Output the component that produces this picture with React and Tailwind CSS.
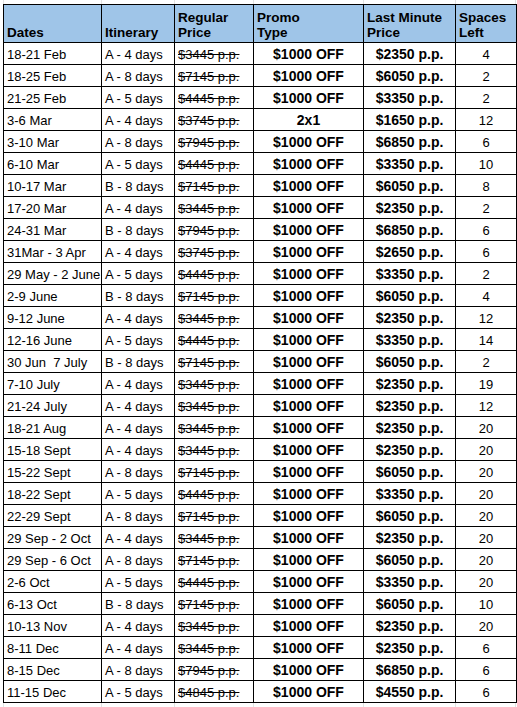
const rows = [
  ['18-21 Feb', 'A - 4 days', '$3445 p.p.', '$1000 OFF', '$2350 p.p.', '4'],
  ['18-25 Feb', 'A - 8 days', '$7145 p.p.', '$1000 OFF', '$6050 p.p.', '2'],
  ['21-25 Feb', 'A - 5 days', '$4445 p.p.', '$1000 OFF', '$3350 p.p.', '2'],
  ['3-6 Mar', 'A - 4 days', '$3745 p.p.', '2x1', '$1650 p.p.', '12'],
  ['3-10 Mar', 'A - 8 days', '$7945 p.p.', '$1000 OFF', '$6850 p.p.', '6'],
  ['6-10 Mar', 'A - 5 days', '$4445 p.p.', '$1000 OFF', '$3350 p.p.', '10'],
  ['10-17 Mar', 'B - 8 days', '$7145 p.p.', '$1000 OFF', '$6050 p.p.', '8'],
  ['17-20 Mar', 'A - 4 days', '$3445 p.p.', '$1000 OFF', '$2350 p.p.', '2'],
  ['24-31 Mar', 'B - 8 days', '$7945 p.p.', '$1000 OFF', '$6850 p.p.', '6'],
  ['31Mar - 3 Apr', 'A - 4 days', '$3745 p.p.', '$1000 OFF', '$2650 p.p.', '6'],
  ['29 May - 2 June', 'A - 5 days', '$4445 p.p.', '$1000 OFF', '$3350 p.p.', '2'],
  ['2-9 June', 'B - 8 days', '$7145 p.p.', '$1000 OFF', '$6050 p.p.', '4'],
  ['9-12 June', 'A - 4 days', '$3445 p.p.', '$1000 OFF', '$2350 p.p.', '12'],
  ['12-16 June', 'A - 5 days', '$4445 p.p.', '$1000 OFF', '$3350 p.p.', '14'],
  ['30 Jun  7 July', 'B - 8 days', '$7145 p.p.', '$1000 OFF', '$6050 p.p.', '2'],
  ['7-10 July', 'A - 4 days', '$3445 p.p.', '$1000 OFF', '$2350 p.p.', '19'],
  ['21-24 July', 'A - 4 days', '$3445 p.p.', '$1000 OFF', '$2350 p.p.', '12'],
  ['18-21 Aug', 'A - 4 days', '$3445 p.p.', '$1000 OFF', '$2350 p.p.', '20'],
  ['15-18 Sept', 'A - 4 days', '$3445 p.p.', '$1000 OFF', '$2350 p.p.', '20'],
  ['15-22 Sept', 'A - 8 days', '$7145 p.p.', '$1000 OFF', '$6050 p.p.', '20'],
  ['18-22 Sept', 'A - 5 days', '$4445 p.p.', '$1000 OFF', '$3350 p.p.', '20'],
  ['22-29 Sept', 'A - 8 days', '$7145 p.p.', '$1000 OFF', '$6050 p.p.', '20'],
  ['29 Sep - 2 Oct', 'A - 4 days', '$3445 p.p.', '$1000 OFF', '$2350 p.p.', '20'],
  ['29 Sep - 6 Oct', 'A - 8 days', '$7145 p.p.', '$1000 OFF', '$6050 p.p.', '20'],
  ['2-6 Oct', 'A - 5 days', '$4445 p.p.', '$1000 OFF', '$3350 p.p.', '20'],
  ['6-13 Oct', 'B - 8 days', '$7145 p.p.', '$1000 OFF', '$6050 p.p.', '10'],
  ['10-13 Nov', 'A - 4 days', '$3445 p.p.', '$1000 OFF', '$2350 p.p.', '20'],
  ['8-11 Dec', 'A - 4 days', '$3445 p.p.', '$1000 OFF', '$2350 p.p.', '6'],
  ['8-15 Dec', 'A - 8 days', '$7945 p.p.', '$1000 OFF', '$6850 p.p.', '6'],
  ['11-15 Dec', 'A - 5 days', '$4845 p.p.', '$1000 OFF', '$4550 p.p.', '6'],
];

const headers = [
  ['Dates'],
  ['Itinerary'],
  ['Regular', 'Price'],
  ['Promo', 'Type'],
  ['Last Minute', 'Price'],
  ['Spaces', 'Left'],
];

const widths = ['w-[98px]', 'w-[73px]', 'w-[79px]', 'w-[110px]', 'w-[92px]', 'w-[61px]'];

function GridStrip({ height }) {
  // faint spreadsheet gridlines peeking out above/below the table
  return (
    <div className={`flex ${height} overflow-hidden pl-[3px]`}>
      {widths.map((w, i) => (
        <div key={i} className={`${w} shrink-0 border-l border-[#e2e2e2] ${i === 5 ? 'border-r' : ''}`} />
      ))}
    </div>
  );
}

export default function App() {
  return (
    <div className="w-[517px] h-[707px] overflow-hidden bg-white text-black font-['Liberation_Sans',Arial,sans-serif]">
      <GridStrip height="h-[4px]" />
      <table className="table-fixed border-collapse ml-[3px] w-[513px]">
        <colgroup>
          {widths.map((w, i) => (
            <col key={i} className={w} />
          ))}
        </colgroup>
        <thead>
          <tr className="h-[38px] bg-[#9fc5e8]">
            {headers.map((h, i) => (
              <th
                key={i}
                className="border border-black align-bottom text-left font-bold text-[13.5px] leading-[15px] px-[3px] pb-[2px]"
              >
                {h.map((line, j) => (
                  <div key={j} className="whitespace-nowrap">{line}</div>
                ))}
              </th>
            ))}
          </tr>
        </thead>
        <tbody>
          {rows.map((r, i) => (
            <tr key={i} className="h-[22px]">
              <td className="border border-black align-bottom px-[3px] pb-[2px] text-[13px] leading-[15px] whitespace-pre">{r[0]}</td>
              <td className="border border-black align-bottom px-[3px] pb-[2px] text-[13px] leading-[15px] whitespace-nowrap">{r[1]}</td>
              <td className="border border-black align-bottom px-[3px] pb-[2px] text-[13px] leading-[15px] whitespace-nowrap">
                <span className="line-through decoration-black">{r[2]}</span>
              </td>
              <td className="border border-black align-bottom text-center pb-[2px] text-[14px] font-bold leading-[15px] whitespace-nowrap">{r[3]}</td>
              <td className="border border-black align-bottom text-center pb-[2px] text-[14px] font-bold leading-[15px] whitespace-nowrap">{r[4]}</td>
              <td className="border border-black align-bottom text-center pb-[2px] text-[13px] leading-[15px]">{r[5]}</td>
            </tr>
          ))}
        </tbody>
      </table>
      <GridStrip height="h-[8px]" />
    </div>
  );
}
